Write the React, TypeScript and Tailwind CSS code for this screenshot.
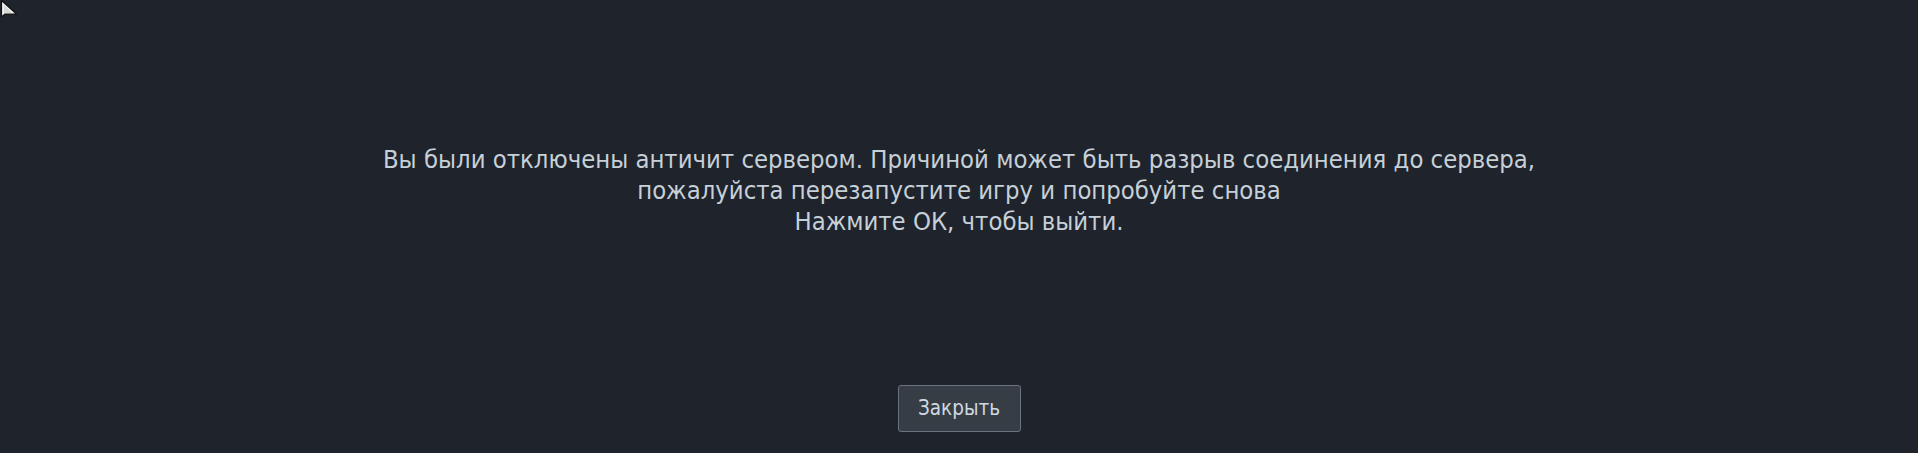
import React from "react";

export default function App() {
  return (
    <div className="relative w-[1918px] h-[453px] bg-[#1f232b] overflow-hidden flex flex-col items-center" style={{ fontFamily: '"DejaVu Sans Condensed", "DejaVu Sans", sans-serif', fontStretch: "condensed" }}>
      <svg className="absolute left-0 top-0" width="20" height="20" viewBox="0 0 20 20">
        <path d="M1.5 0.5 L1.5 17 L5 14 L16.5 14 Z" fill="#f2f2f2" stroke="#111111" strokeWidth="1.2" strokeLinejoin="round" />
        <path d="M4 5 L4 13 L12 13 Z" fill="#d8d8d8" />
      </svg>
      <div className="mt-[144px] text-center text-[25.4px] leading-[31px] text-[#c6d0d8]">
        <div>Вы были отключены античит сервером. Причиной может быть разрыв соединения до сервера,</div>
        <div>пожалуйста перезапустите игру и попробуйте снова</div>
        <div>Нажмите ОК, чтобы выйти.</div>
      </div>
      <button className="mt-[148px] w-[123px] h-[47px] bg-[#373d45] border border-[#6a737e] rounded-[3px] text-[20.5px] text-[#d0dae2]">
        Закрыть
      </button>
    </div>
  );
}
